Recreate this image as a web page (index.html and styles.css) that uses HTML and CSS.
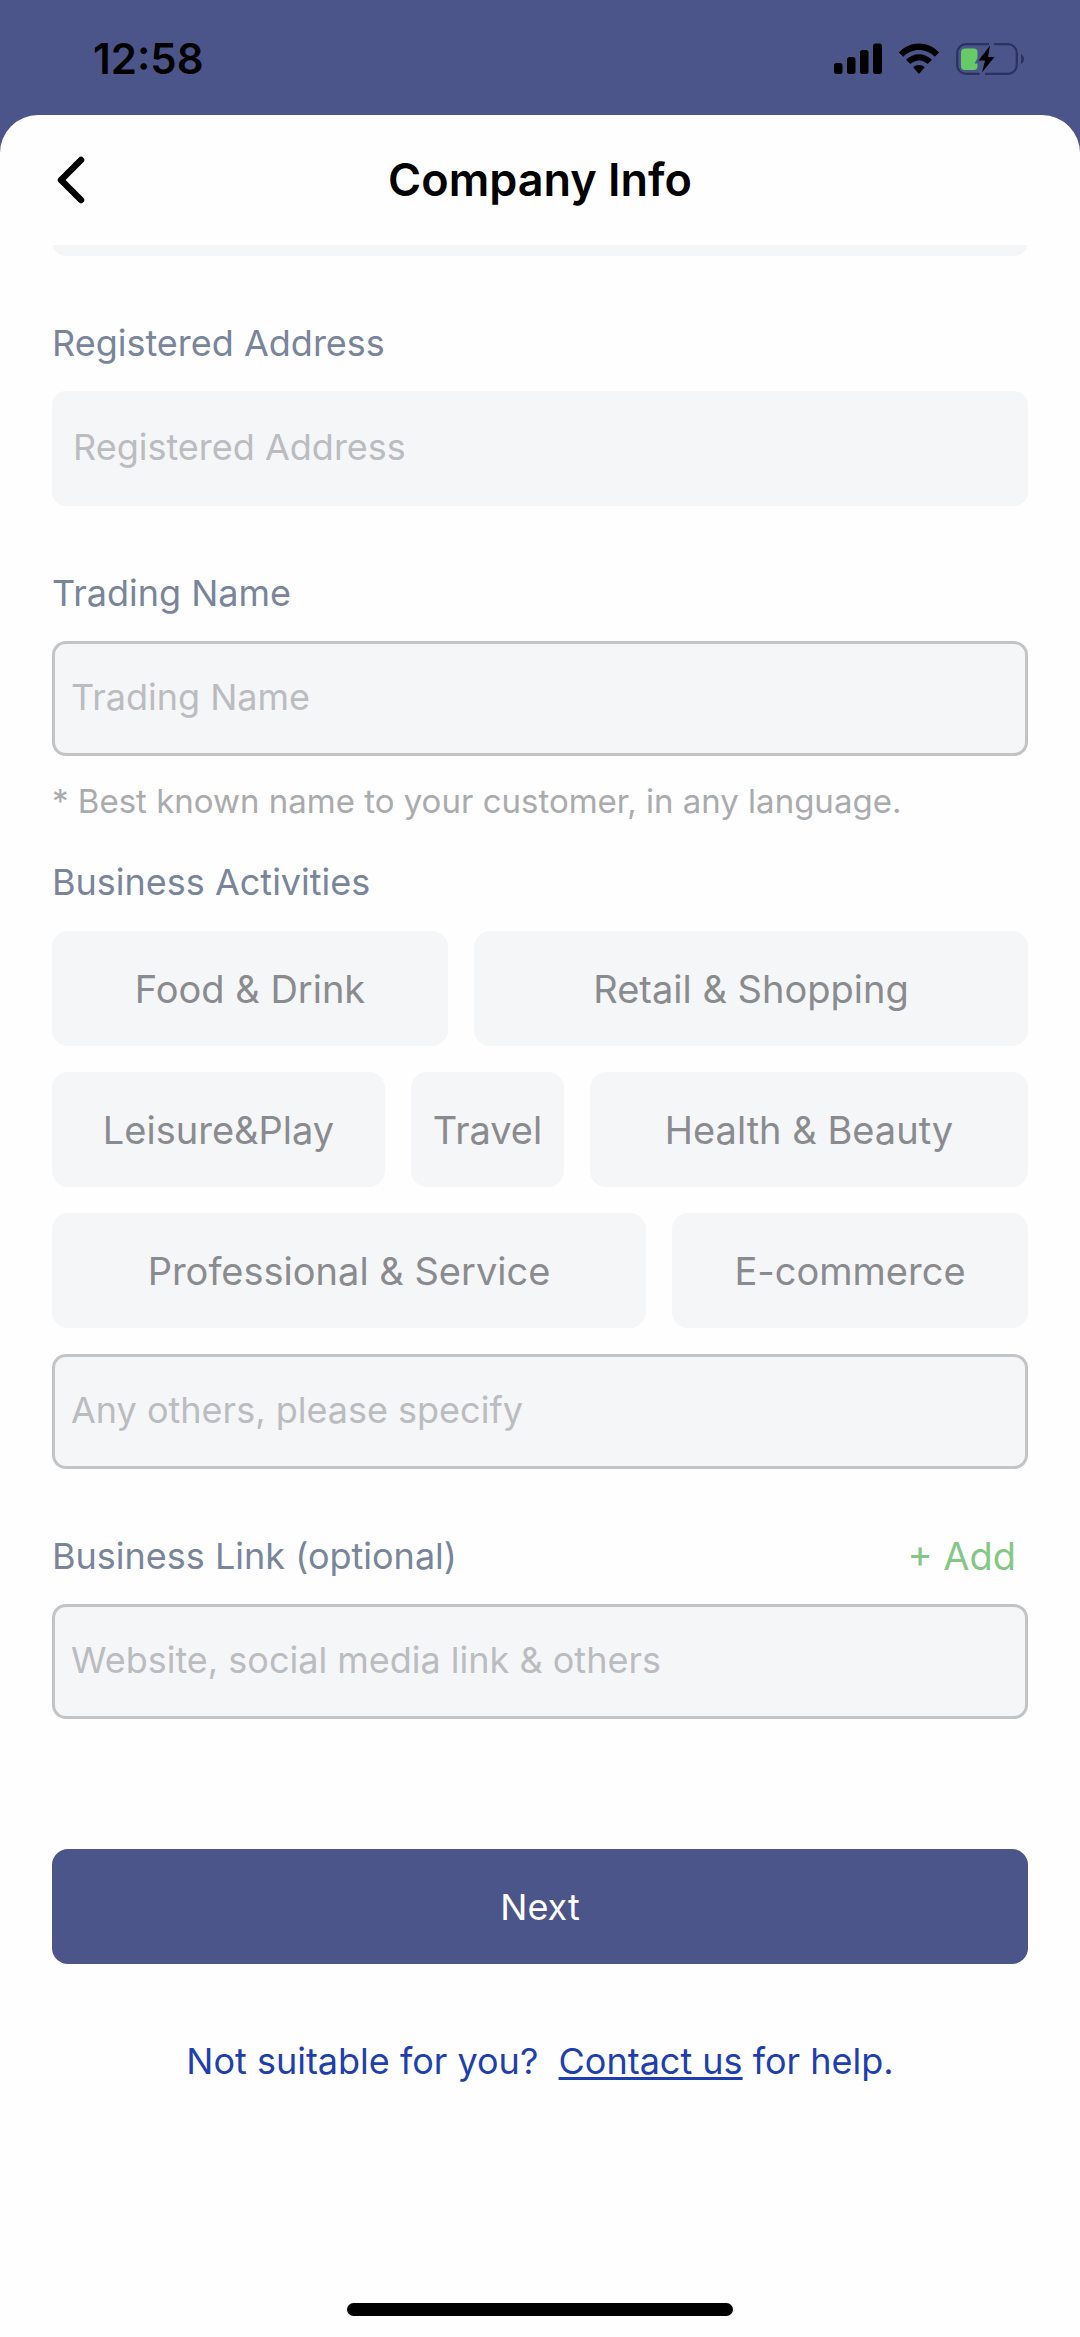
FILE: index.html
```html
<!DOCTYPE html>
<html lang="en">
<head>
<meta charset="utf-8">
<meta name="viewport" content="width=device-width, initial-scale=1">
<title>Company Info</title>
<link rel="stylesheet" href="styles.css">
</head>
<body>
<div class="status-bar">
  <span class="time">12:58</span>
  <div class="status-icons">
    <svg class="signal" width="48" height="32" viewBox="0 0 48 32" aria-hidden="true">
      <rect x="0" y="20" width="8.500" height="11" rx="2.500"/>
      <rect x="13" y="14" width="8.500" height="17" rx="2.500"/>
      <rect x="26" y="7" width="8.500" height="24" rx="2.500"/>
      <rect x="39" y="0.500" width="9" height="30.500" rx="2.500"/>
    </svg>
    <svg class="wifi" width="42" height="32" viewBox="0 0 42 32" aria-hidden="true">
      <path d="M0.800 9.500C12 -2.500 30 -2.500 41.200 9.500L36.800 13.800C28 4.800 14 4.800 5.200 13.800Z"/>
      <path d="M8 16.800C15 9.300 27 9.300 34 16.800L29.600 21C24.600 16.200 17.400 16.200 12.400 21Z"/>
      <path d="M15.200 24.200C18.400 21.300 23.600 21.300 26.800 24.200L21 31Z"/>
    </svg>
    <svg class="battery" width="68" height="32" viewBox="0 0 68 32" aria-hidden="true">
      <path d="M33 1.200H10A8.800 8.800 0 0 0 1.200 10V22A8.800 8.800 0 0 0 10 30.800H23.500M38 1.200H52A8.800 8.800 0 0 1 60.800 10V22A8.800 8.800 0 0 1 52 30.800H29" fill="none" stroke="#2b3160" stroke-width="2.200"/>
      <path d="M65 11C69 13 69 19 65 21Z" fill="#2b3160"/>
      <path d="M9 5.500H18Q21.500 5.500 21.500 9V15L18.500 20.500H21.500V24Q21 27 18 27H9Q5 27 5 23V9.500Q5 5.500 9 5.500Z" fill="#67cb65"/>
      <path d="M34 2.500L22.500 17.500H29L26 29.500L38.500 14H32Z"/>
    </svg>
  </div>
</div>
<div class="sheet">
  <header class="header">
    <button class="back" type="button" aria-label="Back">
      <svg width="28" height="48" viewBox="0 0 28 48" aria-hidden="true"><path d="M24 4L4 24L24 44" fill="none" stroke="#000" stroke-width="6.500" stroke-linecap="round" stroke-linejoin="round"/></svg>
    </button>
    <h1 class="title">Company Info</h1>
  </header>
  <form class="form">
    <div class="scrolled-field"><input class="input" type="text" aria-label="Company" disabled></div>

    <div class="field">
      <label class="label" for="address">Registered Address</label>
      <input class="input" id="address" type="text" placeholder="Registered Address" disabled>
    </div>

    <div class="field">
      <label class="label" for="trading">Trading Name</label>
      <input class="input outlined" id="trading" type="text" placeholder="Trading Name">
    </div>
    <p class="hint">* Best known name to your customer, in any language.</p>

    <div class="activities" role="group" aria-labelledby="activities-label">
      <label class="label" id="activities-label" for="others">Business Activities</label>
      <div class="chips">
        <div class="chip-row first"><button class="chip" type="button">Food &amp; Drink</button><button class="chip" type="button">Retail &amp; Shopping</button></div>
        <div class="chip-row second"><button class="chip" type="button">Leisure&amp;Play</button><button class="chip" type="button">Travel</button><button class="chip" type="button">Health &amp; Beauty</button></div>
        <div class="chip-row third"><button class="chip" type="button">Professional &amp; Service</button><button class="chip" type="button">E-commerce</button></div>
        <input class="input outlined" id="others" type="text" placeholder="Any others, please specify">
      </div>
    </div>

    <div class="field">
      <div class="label-row">
        <label class="label" for="link">Business Link (optional)</label>
        <button class="add" type="button">+ Add</button>
      </div>
      <input class="input outlined" id="link" type="text" placeholder="Website, social media link &amp; others">
    </div>

    <button class="next" type="submit">Next</button>
    <p class="help">Not suitable for you?&nbsp; <a class="contact" href="#contact">Contact us</a> for help.</p>
  </form>
  <div class="home-indicator"></div>
</div>
</body>
</html>
```
FILE: styles.css
```css
* {
  box-sizing: border-box;
}

body {
  margin: 0;
  min-height: 100vh;
  display: flex;
  flex-direction: column;
  background: #4c5589;
  color: #000;
  font-family: Inter, "Liberation Sans", sans-serif;
  font-size: 36px;
  line-height: 48px;
}

button,
input {
  margin: 0;
  padding: 0;
  border: 0;
  font: inherit;
}

.status-bar {
  display: flex;
  justify-content: space-between;
  align-items: center;
  height: 115px;
  padding: 2px 56px 0 93px;
}

.time {
  font-size: 42px;
  font-weight: 600;
}

.status-icons {
  display: flex;
  align-items: center;
  gap: 16px;
}

.sheet {
  flex: 1;
  display: flex;
  flex-direction: column;
  background: #fefefe;
  border-radius: 38px 38px 0 0;
}

.header {
  display: grid;
  grid-template-columns: 28px 1fr 28px;
  align-items: center;
  height: 130px;
  padding: 0 57px;
}

.back {
  display: flex;
  background: none;
}

.title {
  margin: 0;
  font-size: 45px;
  font-weight: 600;
  text-align: center;
}

.form {
  display: flex;
  flex-direction: column;
  padding: 0 52px;
}

.scrolled-field {
  display: flex;
  flex-direction: column;
  justify-content: flex-end;
  height: 11px;
  overflow: hidden;
}

.field {
  display: flex;
  flex-direction: column;
  gap: 24px;
  margin-top: 63px;
}

.label {
  color: #78859b;
}

.input {
  flex: none;
  width: 100%;
  height: 115px;
  padding: 0 21px 3px;
  border-radius: 14px;
  background: #f5f6f8;
  color: #333;
}

.outlined {
  padding: 0 16px 3px;
  border: 3px solid #c3c4c6;
}

.input::placeholder {
  color: #bbbcbf;
  opacity: 1;
}

.hint {
  margin: 21px 0 0;
  color: #aaabad;
  font-size: 33px;
}

.activities {
  display: flex;
  flex-direction: column;
  gap: 25px;
  margin-top: 33px;
}

.chips {
  display: flex;
  flex-direction: column;
  gap: 26px;
}

.chip-row {
  display: grid;
  gap: 26px;
}

.first {
  grid-template-columns: 396fr 554fr;
}

.second {
  grid-template-columns: 333fr 153fr 438fr;
}

.third {
  grid-template-columns: 594fr 356fr;
}

.chip {
  height: 115px;
  border-radius: 16px;
  background: #f5f6f8;
  color: #8a8b8f;
  font-size: 38px;
  white-space: nowrap;
}

.label-row {
  display: flex;
  justify-content: space-between;
  padding-right: 12px;
}

.add {
  background: none;
  color: #85c885;
  font-size: 38px;
}

.next {
  height: 115px;
  margin-top: 130px;
  border-radius: 16px;
  background: #4c5589;
  color: #fff;
}

.help {
  margin: 73px 0 0;
  color: #1d3fb0;
  text-align: center;
}

.contact {
  color: inherit;
  text-decoration-thickness: 3px;
  text-underline-offset: 3px;
}

.home-indicator {
  width: 386px;
  height: 13px;
  margin: auto auto 21px;
  border-radius: 7px;
  background: #000;
}
```
